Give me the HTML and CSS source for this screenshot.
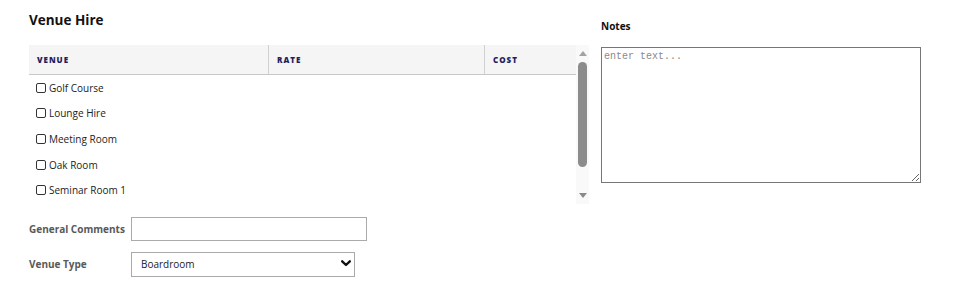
FILE: index.html
```html
<!doctype html>
<html lang="en">
    <head>
        <meta charset="UTF-8" />
        <meta name="viewport" content="width=device-width, initial-scale=1.0" />
        <title>Venue Hire</title>
        <link rel="stylesheet" href="styles.css">
    </head>
    <body>
        <div class="page">
            <section class="venue-hire">
                <h2 class="section-title">Venue Hire</h2>

                <div class="grid-wrap">
                    <div class="grid">
                        <div class="grid-head">
                            <div class="col col-venue">Venue</div>
                            <div class="col col-rate">Rate</div>
                            <div class="col col-cost">Cost</div>
                        </div>
                        <div class="grid-body">
                            <label class="venue-row"><input type="checkbox" class="check"> Golf Course</label>
                            <label class="venue-row"><input type="checkbox" class="check"> Lounge Hire</label>
                            <label class="venue-row"><input type="checkbox" class="check"> Meeting Room</label>
                            <label class="venue-row"><input type="checkbox" class="check"> Oak Room</label>
                            <label class="venue-row"><input type="checkbox" class="check"> Seminar Room 1</label>
                        </div>
                    </div>

                    <!-- fake scrollbar, the real one is hidden in the screenshot browser -->
                    <div class="scrollbar">
                        <span class="arrow-up"></span>
                        <span class="thumb"></span>
                        <span class="arrow-down"></span>
                    </div>
                </div>

                <div class="form-row first">
                    <label class="field-label" for="comments">General Comments</label>
                    <input type="text" id="comments" class="text-input">
                </div>

                <div class="form-row">
                    <label class="field-label" for="venueType">Venue Type</label>
                    <div class="select-wrap">
                        <select id="venueType" class="select">
                            <option>Boardroom</option>
                            <option>Function Room</option>
                            <option>Outdoor</option>
                        </select>
                        <svg class="chevron" width="10" height="7" viewBox="0 0 10 7">
                            <path d="M1.2 1.3 L5 5 L8.8 1.3" fill="none" stroke="#111" stroke-width="2.4" stroke-linecap="round" stroke-linejoin="round"></path>
                        </svg>
                    </div>
                </div>
            </section>

            <section class="notes">
                <div class="notes-title">Notes</div>
                <textarea class="notes-box" placeholder="enter text..."></textarea>
            </section>
        </div>
    </body>
</html>
```

FILE: styles.css
```css
* {
    margin: 0;
    padding: 0;
    box-sizing: border-box;
    font-family: "Open Sans", "Liberation Sans", sans-serif;
}

body {
    background: #fff;
    color: #222;
}

.page {
    display: flex;
    gap: 12px;
    padding: 11px 0 0 29px;
}

.venue-hire {
    width: 560px;
}

.section-title {
    font-size: 13.5px;
    font-weight: 700;
    line-height: 18px;
    color: #111;
    margin-bottom: 16px;
}

.grid-wrap {
    display: flex;
    height: 159px;
}

.grid {
    flex: 1;
    overflow: hidden;
}

.grid-head {
    display: flex;
    height: 30px;
    background: #f5f5f5;
    border-bottom: 1px solid #c8c8c8;
}

.col {
    display: flex;
    align-items: center;
    padding-left: 8px;
    font-size: 8px;
    font-weight: 800;
    letter-spacing: 1px;
    text-transform: uppercase;
    color: #1f1f60;
}

.col-venue {
    width: 239px;
}

.col-rate {
    width: 216px;
    border-left: 1px solid #d0d0d0;
}

.col-cost {
    flex: 1;
    border-left: 1px solid #d0d0d0;
}

.venue-row {
    display: flex;
    align-items: center;
    gap: 3px;
    height: 25.6px;
    padding-left: 7px;
    font-size: 10px;
    color: #222;
}

.check {
    appearance: none;
    width: 10px;
    height: 10px;
    border: 1px solid #333;
    border-radius: 2px;
    background: #fff;
}

.scrollbar {
    width: 13px;
    background: #f9f9f9;
    display: flex;
    flex-direction: column;
    align-items: center;
    padding-top: 6px;
}

.arrow-up {
    width: 0;
    height: 0;
    border-left: 4px solid transparent;
    border-right: 4px solid transparent;
    border-bottom: 5px solid #a3a3a3;
}

.thumb {
    width: 9px;
    height: 105px;
    margin-top: 6px;
    border-radius: 5px;
    background: #8c8c8c;
}

.arrow-down {
    width: 0;
    height: 0;
    margin-top: 26px;
    border-left: 4px solid transparent;
    border-right: 4px solid transparent;
    border-top: 5px solid #8a8a8a;
}

.form-row {
    display: flex;
    align-items: center;
    margin-top: 10px;
}

.form-row.first {
    margin-top: 13px;
}

.field-label {
    flex-shrink: 0;
    width: 102px;
    white-space: nowrap;
    font-size: 10px;
    font-weight: 700;
    color: #595959;
}

.text-input {
    width: 236px;
    height: 24px;
    border: 1px solid #aaa;
    background: #fff;
    outline: none;
}

.select-wrap {
    position: relative;
}

.select {
    appearance: none;
    width: 224px;
    height: 25px;
    border: 1px solid #aaa;
    border-radius: 0;
    background: #fff;
    padding-left: 9px;
    font-size: 10px;
    color: #222;
}

.chevron {
    position: absolute;
    right: 4px;
    top: 9px;
    pointer-events: none;
}

.notes {
    width: 320px;
}

.notes-title {
    font-size: 10px;
    font-weight: 700;
    line-height: 14px;
    color: #111;
    margin-top: 8px;
    margin-bottom: 14px;
}

.notes-box {
    display: block;
    width: 320px;
    height: 136px;
    border: 1px solid #767676;
    padding: 2px;
    font-family: "Liberation Mono", monospace;
    font-size: 10px;
    line-height: 13px;
    color: #222;
}

.notes-box::placeholder {
    color: #8a8a8a;
}
```
